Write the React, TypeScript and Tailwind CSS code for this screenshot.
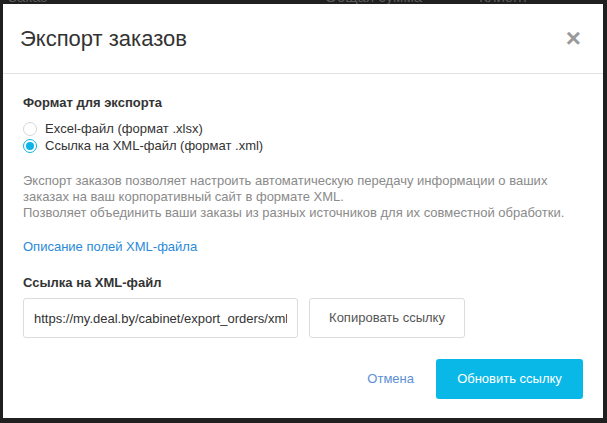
import React, { useState } from "react";

const XML_URL = "https://my.deal.by/cabinet/export_orders/xml?hash=4f2c9a";

const Radio = ({ checked, label, onClick }: { checked: boolean; label: string; onClick: () => void }) => (
  <label className="flex items-center gap-[8px] cursor-pointer h-[17px]" onClick={onClick}>
    <span
      className={`flex items-center justify-center w-[14px] h-[14px] rounded-full border ${
        checked ? "border-[#0cb3e4]" : "border-[#d6d6d6]"
      } bg-white`}
    >
      {checked && <span className="w-[8px] h-[8px] rounded-full bg-[#0cb3e4]" />}
    </span>
    <span className="text-[13px] text-[#333]">{label}</span>
  </label>
);

const App = () => {
  const [format, setFormat] = useState("xml");

  return (
    <div className="relative w-[607px] h-[423px] bg-[#202020] overflow-hidden font-['Liberation_Sans',Arial,sans-serif]">
      {/* table header behind the overlay */}
      <div className="flex text-[15px] text-[#5a5a5a] -mt-[14px] h-[18px]">
        <span className="w-[325px] pl-[8px]">Заказ</span>
        <span className="w-[154px]">Общая сумма</span>
        <span>Клиент</span>
      </div>

      {/* modal */}
      <div className="absolute left-[3px] top-[4px] w-[600px] h-[414px] bg-white flex flex-col">
        <div className="flex items-center justify-between h-[70px] pl-[17px] pr-[22px] border-b border-[#e2e2e2]">
          <h2 className="text-[22px] text-[#333] font-normal">Экспорт заказов</h2>
          <button className="text-[#9a9a9a] text-[26px] font-bold leading-none pb-[2px]">×</button>
        </div>

        <div className="flex flex-col px-[20px] pt-[21px]">
          <h3 className="text-[13px] font-bold text-[#333] leading-[16px]">Формат для экспорта</h3>
          <div className="flex flex-col mt-[9px]">
            <Radio checked={format === "xlsx"} label="Excel-файл (формат .xlsx)" onClick={() => setFormat("xlsx")} />
            <Radio checked={format === "xml"} label="Ссылка на XML-файл (формат .xml)" onClick={() => setFormat("xml")} />
          </div>

          <p className="mt-[19px] text-[13px] leading-[16px] text-[#8a8a8a]">
            Экспорт заказов позволяет настроить автоматическую передачу информации о ваших
            <br />
            заказах на ваш корпоративный сайт в формате XML.
            <br />
            Позволяет объединить ваши заказы из разных источников для их совместной обработки.
          </p>

          <a href="#" className="mt-[18px] text-[13px] leading-[16px] text-[#2a8ad8]">
            Описание полей XML-файла
          </a>

          <h3 className="mt-[20px] text-[13px] font-bold text-[#333] leading-[16px]">Ссылка на XML-файл</h3>

          <div className="flex gap-[11px] mt-[7px]">
            <input
              readOnly
              value={XML_URL}
              className="w-[275px] h-[40px] px-[10px] border border-[#dcdcdc] rounded-[3px] text-[13px] text-[#333] outline-none"
            />
            <button className="w-[156px] h-[40px] border border-[#dcdcdc] rounded-[3px] text-[13px] text-[#555] bg-white">
              Копировать ссылку
            </button>
          </div>
        </div>

        <div className="flex items-center justify-end gap-[22px] mt-auto mb-[19px] pr-[20px]">
          <button className="text-[13px] text-[#5c8fd6]">Отмена</button>
          <button className="w-[147px] h-[40px] rounded-[3px] bg-[#0ab8e8] text-white text-[13px]">Обновить ссылку</button>
        </div>
      </div>
    </div>
  );
};

export default App;
